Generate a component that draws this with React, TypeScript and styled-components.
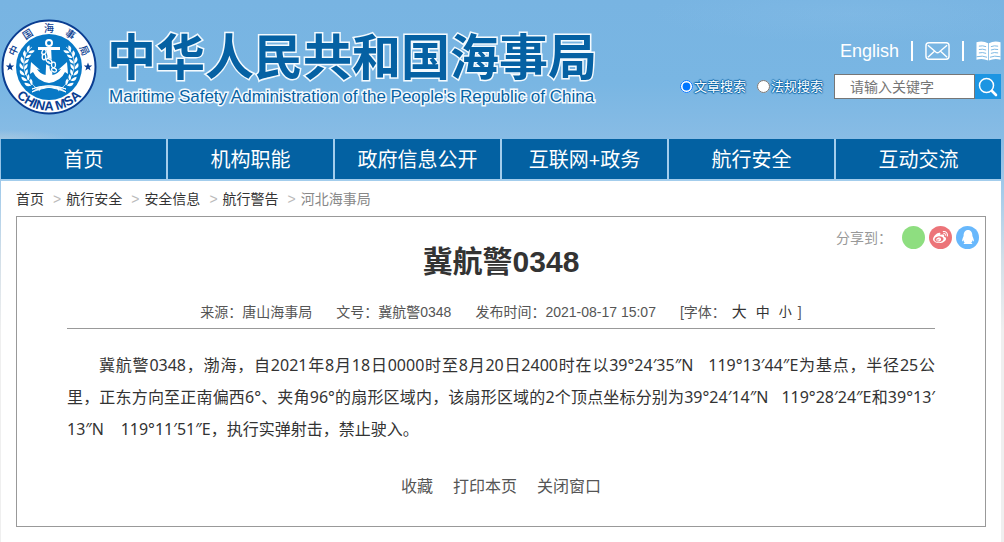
import React from "react";
import styled, { createGlobalStyle } from "styled-components";
import { FaWeibo, FaQq } from "react-icons/fa";

const sans = `"Liberation Sans", "Noto Sans CJK SC", sans-serif`;
const reading = `"Noto Sans", "Noto Sans CJK SC", sans-serif`;

const GlobalStyle = createGlobalStyle`
  * { box-sizing: border-box; }
  body {
    margin: 0;
    font-family: ${sans};
    font-size: 14px;
    color: #333;
    background: #efefef linear-gradient(#7ab4e2 0, #78b5e2 60px, #88bce5 139px, #a3cbea 190px, #d3dfe8 260px, #efefef 330px) no-repeat;
  }
  a { color: inherit; text-decoration: none; }
`;

const Page = styled.div`
  display: flex;
  flex-direction: column;
  min-height: 100vh;
  padding: 0 3px 0 1px;
`;

const Header = styled.header`
  display: flex;
  justify-content: space-between;
  height: 139px;
  margin-left: -1px;
  background:
    radial-gradient(ellipse at 0 100%, rgba(190, 210, 222, 0.5), transparent 70px),
    radial-gradient(ellipse at 85% 10%, rgba(150, 198, 235, 0.2), transparent 200px),
    linear-gradient(#78b4e2, #79b6e3 60%, #88bce5);
`;

const Brand = styled.a`
  display: flex;
  gap: 10px;
  padding: 19px 0 0 1px;
  color: #0561a3;
`;

const BrandText = styled.div`
  display: flex;
  flex-direction: column;
  padding-top: 8px;
  white-space: nowrap;
  -webkit-text-stroke: 3px #f4fafe;
  paint-order: stroke fill;
`;

const BrandName = styled.h1`
  margin: 0;
  font-family: "Noto Sans CJK SC", sans-serif;
  font-size: 49px;
  line-height: 54px;
  font-weight: 700;
`;

const BrandSub = styled.span`
  padding: 5px 0 0 2px;
  font-size: 17px;
  line-height: 22px;
`;

const Tools = styled.div`
  display: flex;
  flex-direction: column;
  align-items: flex-end;
  gap: 12px;
  padding-top: 40px;
`;

const QuickLinks = styled.div`
  display: flex;
  align-items: center;
  gap: 12px;
  height: 22px;
  color: #fff;
  font-size: 18px;

  a { display: flex; }
`;

const Divider = styled.span`
  width: 2px;
  height: 20px;
  background: #fff;
`;

const SearchForm = styled.form`
  display: flex;
  align-items: center;
`;

const RadioLabel = styled.label`
  display: flex;
  align-items: center;
  gap: 1px;
  margin-right: 11px;
  color: #fff;
  font-size: 13px;
  line-height: 24px;
  text-shadow: 1px 0 1px #0b66a8, -1px 0 1px #0b66a8, 0 1px 1px #0b66a8, 0 -1px 1px #0b66a8;

  input { width: 13px; height: 13px; margin: 0; }
`;

const SearchInput = styled.input`
  width: 141px;
  height: 25px;
  padding: 0 0 0 15px;
  border: 1px solid #767676;
  border-radius: 0;
  background: #fff;
  font-family: ${sans};
  font-size: 14px;

  &::placeholder { color: #757575; }
`;

const SearchButton = styled.button`
  display: flex;
  align-items: center;
  justify-content: center;
  width: 26px;
  height: 25px;
  padding: 0;
  border: 0;
  background: #1c95e2;
`;

const Nav = styled.nav`
  display: grid;
  grid-template-columns: repeat(6, 1fr);
  gap: 2px;
  padding-bottom: 2px;
  background: #a3cdec;
`;

const NavLink = styled.a`
  padding-top: 2px;
  background: #0361a2;
  color: #fff;
  font-family: ${reading};
  font-size: 20px;
  line-height: 38px;
  text-align: center;
  white-space: nowrap;
`;

const Main = styled.main`
  flex: 1;
  padding: 0 15px 15px;
  background: #fff;
`;

const Crumbs = styled.nav`
  display: flex;
  padding-top: 2px;
  line-height: 33px;
`;

const Crumb = styled.a<{ $current?: boolean }>`
  color: ${(p) => (p.$current ? "#888" : "#333")};

  &:not(:first-child)::before {
    content: ">";
    padding: 0 5px 0 9px;
    color: #bbb;
  }
`;

const Article = styled.article`
  padding: 8px 6px 23px;
  border: 1px solid #999;
`;

const Share = styled.div`
  display: flex;
  align-items: center;
  justify-content: flex-end;
  gap: 4px;
  height: 24px;
  color: #999;
`;

const ShareLabel = styled.span`
  margin-right: 6px;
`;

const ShareLink = styled.a<{ $color: string }>`
  display: flex;
  align-items: center;
  justify-content: center;
  width: 23px;
  height: 23px;
  border-radius: 50%;
  background: ${(p) => p.$color};
  color: #fff;
`;

const Inner = styled.div`
  padding: 0 44px;
`;

const Title = styled.h2`
  margin: 0;
  font-size: 30px;
  line-height: 26px;
  text-align: center;
`;

const Meta = styled.div`
  display: flex;
  justify-content: center;
  gap: 24px;
  margin-top: 29px;
  padding-bottom: 8px;
  border-bottom: 1px solid #999;
  color: #555;
  line-height: 16px;
`;

const SizeControl = styled.span`
  display: flex;
  gap: 3px;
`;

const SizeButton = styled.button<{ $size: number }>`
  padding: 0 3px;
  border: 0;
  background: none;
  color: #333;
  font-family: ${sans};
  font-size: ${(p) => p.$size}px;
  line-height: 16px;
`;

const Paragraph = styled.p`
  margin: 20px 0 0;
  font-family: ${reading};
  font-size: 16px;
  line-height: 32px;
  text-indent: 32px;
  text-align: justify;
  text-spacing-trim: space-all;
`;

const Actions = styled.div`
  display: flex;
  justify-content: center;
  gap: 20px;
  margin-top: 26px;

  button {
    padding: 0;
    border: 0;
    background: none;
    color: #555;
    font-family: ${sans};
    font-size: 16px;
    line-height: 32px;
  }
`;

const ringChars = [
  { char: "中", angle: -65 },
  { char: "国", angle: -33 },
  { char: "海", angle: 0 },
  { char: "事", angle: 33 },
  { char: "局", angle: 65 },
];

const star = "0,-4.4 1.1,-1.4 4.2,-1.4 1.7,0.6 2.6,3.6 0,1.8 -2.6,3.6 -1.7,0.6 -4.2,-1.4 -1.1,-1.4";

const leaves = [-50, -32, -14, 4, 22, 40, 58];

function Branch() {
  return (
    <g>
      <path d="M-17 -20 C-29 -12 -29 10 -9 24" fill="none" stroke="#fff" strokeWidth="0.7" />
      {leaves.map((a) => (
        <g key={a} transform={`rotate(${-a * 0.75 + 4}) translate(-25.5 0)`}>
          <path d="M0 3 C-4.5 1.5 -4.5 -1 -3.6 -3.4 C-1.2 -1.6 0 0.4 0 3Z" fill="#fff" />
          <path d="M0.6 3 C0.4 0 1.6 -1.6 4 -2.8 C4.4 0 3.2 2.2 0.6 3Z" fill="#fff" />
        </g>
      ))}
    </g>
  );
}

function Emblem() {
  return (
    <svg width="96" height="96" viewBox="-48 -48 96 96" role="img" aria-label="中国海事局">
      <circle r="46.5" fill="#fff" stroke="#0a3d91" strokeWidth="2" />
      <circle r="33" fill="#0879c6" />
      {ringChars.map(({ char, angle }) => (
        <text
          key={char}
          transform={`rotate(${angle})`}
          y="-35.5"
          textAnchor="middle"
          fontFamily="Noto Sans CJK SC"
          fontSize="10"
          fontWeight="500"
          fill="#0a3d91"
        >
          {char}
        </text>
      ))}
      <polygon points={star} transform="translate(-39 0)" fill="#0a3d91" />
      <polygon points={star} transform="translate(39 0)" fill="#0a3d91" />
      <path id="ringBottom" d="M-43.5 0 A43.5 43.5 0 0 0 43.5 0" fill="none" />
      <text fontFamily="Liberation Sans" fontWeight="700" fontSize="13" fill="#0a3d91" textAnchor="middle">
        <textPath href="#ringBottom" startOffset="50%">CHINA MSA</textPath>
      </text>
      <Branch />
      <g transform="scale(-1 1)"><Branch /></g>
      <path d="M-17 22 C-8 18 4 20 17 25 C8 18 -3 17 -17 22Z M17 22 C8 18 -4 20 -17 25 C-8 18 3 17 17 22Z" fill="#fff" stroke="#fff" />
      <circle cy="-24" r="3" fill="none" stroke="#fff" strokeWidth="2" />
      <path d="M-11 -20 H11 V-17 H2.2 L3.4 8 Q9 7 12 2 L9 3 L18 -5 L19 7 L16 5 Q12 14 0 16 Q-12 14 -16 5 L-19 7 L-18 -5 L-9 3 L-12 2 Q-9 7 -3.4 8 L-2.2 -17 H-11Z" fill="#fff" />
      <g fill="none" stroke="#0879c6" strokeWidth="3">
        <ellipse cx="-5" cy="-10" rx="2" ry="3" />
        <ellipse cx="0" cy="-5" rx="3" ry="2" transform="rotate(30 0 -5)" />
        <ellipse cx="4" cy="0" rx="2" ry="3" />
      </g>
      <g fill="none" stroke="#fff" strokeWidth="1.3">
        <ellipse cx="-5" cy="-15" rx="2" ry="2.6" transform="rotate(25 -5 -15)" />
        <ellipse cx="-5" cy="-10" rx="1.8" ry="2.8" />
        <ellipse cx="0" cy="-6" rx="3.2" ry="1.8" transform="rotate(35 0 -6)" />
        <ellipse cx="4.5" cy="-2" rx="2" ry="2.8" />
        <ellipse cx="5" cy="3" rx="2.6" ry="1.8" transform="rotate(25 5 3)" />
      </g>
    </svg>
  );
}

function MailIcon() {
  return (
    <svg width="25" height="20" viewBox="0 0 26 20" fill="none" stroke="#fff" strokeWidth="1.5" aria-hidden="true">
      <rect x="1" y="1.5" width="24" height="17" rx="3" />
      <path d="M3 4 L11.2 11 Q13 12.4 14.8 11 L23 4 M3 16.5 L9.5 10.5 M23 16.5 L16.5 10.5" />
    </svg>
  );
}

function BookIcon() {
  return (
    <svg width="25" height="22" viewBox="0 0 26 22" aria-hidden="true">
      <path d="M0.5 2 Q7 0 12.6 3 V21 Q7 18 0.5 20Z M25.5 2 Q19 0 13.4 3 V21 Q19 18 25.5 20Z" fill="#fff" />
      <path d="M3 6 Q7 5 10.5 6.5 M3 9.5 Q7 8.5 10.5 10 M3 13 Q7 12 10.5 13.5 M0.5 17 Q7 15.5 11.5 17.5 M23 6 Q19 5 15.5 6.5 M23 9.5 Q19 8.5 15.5 10 M23 13 Q19 12 15.5 13.5 M25.5 17 Q19 15.5 14.5 17.5" fill="none" stroke="#79b6e3" strokeWidth="1" />
    </svg>
  );
}

function SearchIcon() {
  return (
    <svg width="20" height="20" viewBox="0 0 20 20" fill="none" stroke="#fff" aria-hidden="true">
      <circle cx="8.5" cy="8.5" r="7" strokeWidth="1.5" />
      <path d="M14 14 L18 18" strokeWidth="2.6" strokeLinecap="round" />
    </svg>
  );
}

const navItems = ["首页", "机构职能", "政府信息公开", "互联网+政务", "航行安全", "互动交流"];
const crumbs = ["首页", "航行安全", "安全信息", "航行警告", "河北海事局"];

const notice =
  "冀航警0348，渤海，自2021年8月18日0000时至8月20日2400时在以39°24′35″N\u00a0\u00a0\u00a0119°13′44″E为基点，半径25公里，" +
  "正东方向至正南偏西6°、夹角96°的扇形区域内，该扇形区域的2个顶点坐标分别为39°24′14″N\u00a0\u00a0\u00a0119°28′24″E和39°13′\u200b13″N" +
  "\u00a0\u00a0\u00a0\u00a0119°11′51″E，执行实弹射击，禁止驶入。";

export default function App() {
  return (
    <>
      <GlobalStyle />
      <Page>
        <Header>
          <Brand href="#">
            <Emblem />
            <BrandText>
              <BrandName>中华人民共和国海事局</BrandName>
              <BrandSub>Maritime Safety Administration of the People's Republic of China</BrandSub>
            </BrandText>
          </Brand>
          <Tools>
            <QuickLinks>
              <a href="#">English</a>
              <Divider />
              <a href="#" aria-label="邮箱"><MailIcon /></a>
              <Divider />
              <a href="#" aria-label="阅读"><BookIcon /></a>
            </QuickLinks>
            <SearchForm>
              <RadioLabel>
                <input type="radio" name="scope" defaultChecked />
                文章搜索
              </RadioLabel>
              <RadioLabel>
                <input type="radio" name="scope" />
                法规搜索
              </RadioLabel>
              <SearchInput type="text" placeholder="请输入关键字" aria-label="请输入关键字" />
              <SearchButton type="button" aria-label="搜索"><SearchIcon /></SearchButton>
            </SearchForm>
          </Tools>
        </Header>
        <Nav>
          {navItems.map((item) => (
            <NavLink key={item} href="#">{item}</NavLink>
          ))}
        </Nav>
        <Main>
          <Crumbs>
            {crumbs.map((item, i) => (
              <Crumb key={item} href="#" $current={i === crumbs.length - 1}>{item}</Crumb>
            ))}
          </Crumbs>
          <Article>
            <Share>
              <ShareLabel>分享到：</ShareLabel>
              <ShareLink href="#" aria-label="微信" $color="#8ede80" />
              <ShareLink href="#" aria-label="微博" $color="#ec7479"><FaWeibo size={15} /></ShareLink>
              <ShareLink href="#" aria-label="QQ" $color="#68b8fc"><FaQq size={14} /></ShareLink>
            </Share>
            <Inner>
              <Title>冀航警0348</Title>
              <Meta>
                <span>来源：唐山海事局</span>
                <span>文号：冀航警0348</span>
                <span>发布时间：2021-08-17 15:07</span>
                <SizeControl>
                  [字体：
                  <SizeButton type="button" $size={15}>大</SizeButton>
                  <SizeButton type="button" $size={14}>中</SizeButton>
                  <SizeButton type="button" $size={13}>小</SizeButton>
                  ]
                </SizeControl>
              </Meta>
              <Paragraph>{notice}</Paragraph>
              <Actions>
                <button type="button">收藏</button>
                <button type="button">打印本页</button>
                <button type="button">关闭窗口</button>
              </Actions>
            </Inner>
          </Article>
        </Main>
      </Page>
    </>
  );
}
